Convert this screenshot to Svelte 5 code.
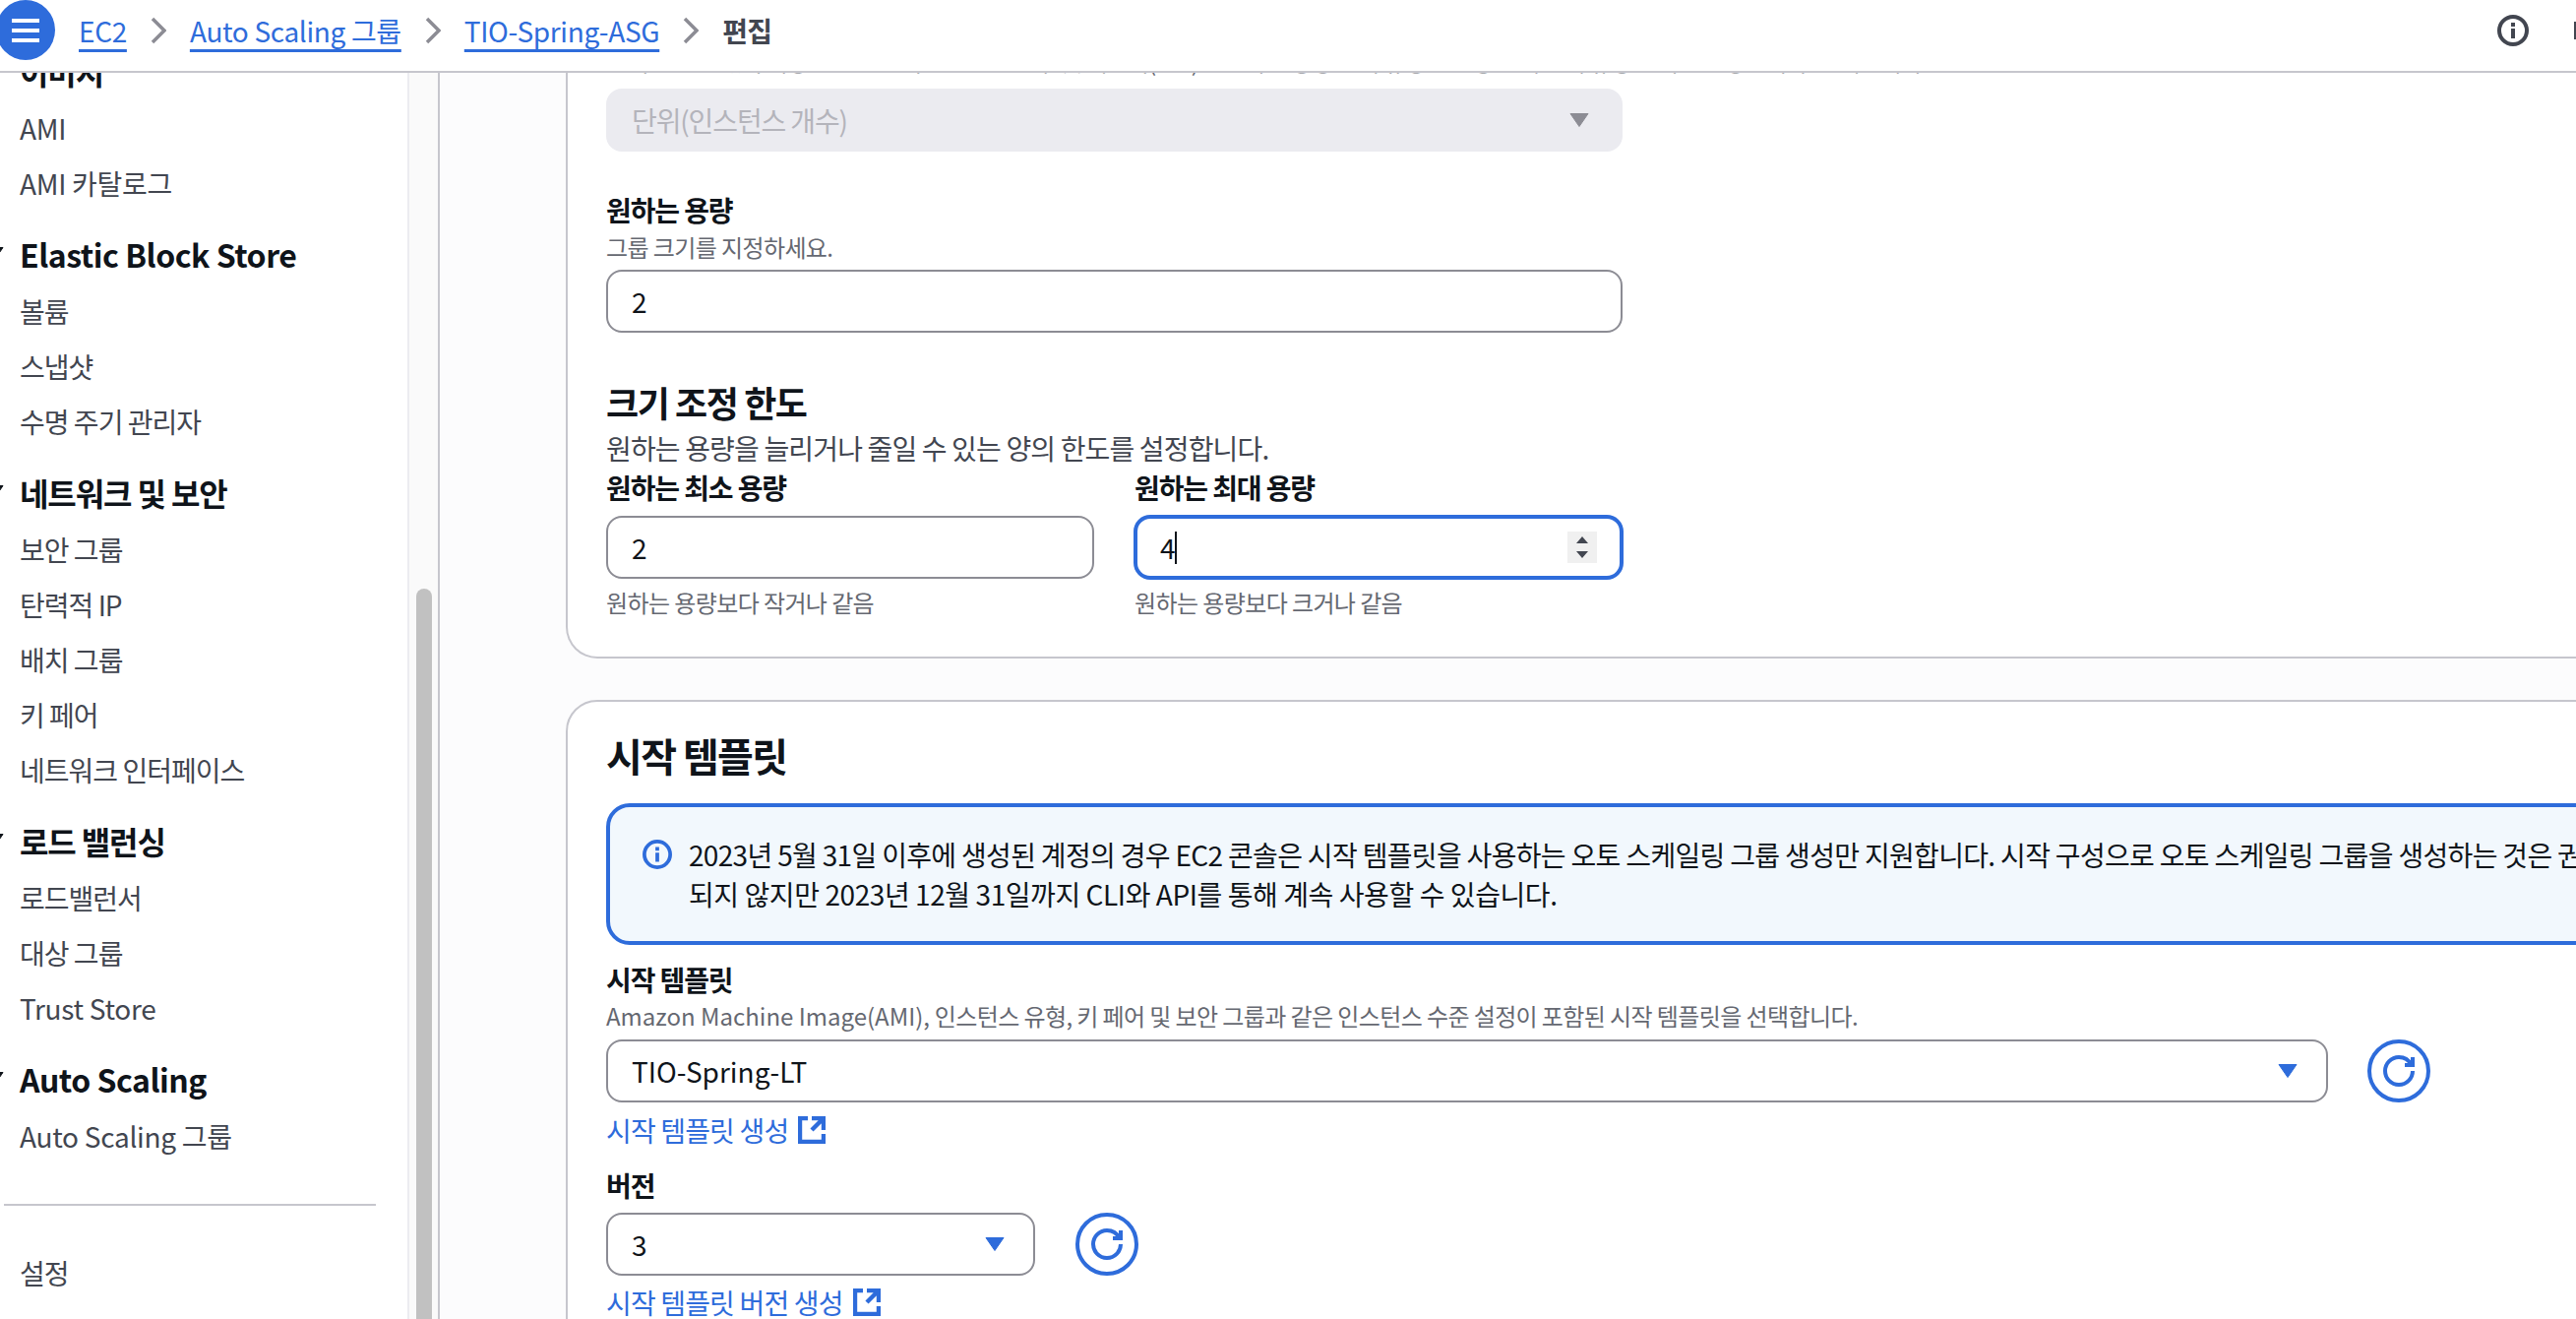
<script>
  const crumbs = [
    { label: 'EC2', link: true },
    { label: 'Auto Scaling 그룹', link: true },
    { label: 'TIO-Spring-ASG', link: true },
    { label: '편집', link: false }
  ];

  const groups = [
    { items: ['이미지', 'AMI', 'AMI 카탈로그'], boldFirst: true },
    { title: 'Elastic Block Store', items: ['볼륨', '스냅샷', '수명 주기 관리자'] },
    { title: '네트워크 및 보안', items: ['보안 그룹', '탄력적 IP', '배치 그룹', '키 페어', '네트워크 인터페이스'] },
    { title: '로드 밸런싱', items: ['로드밸런서', '대상 그룹', 'Trust Store'] },
    { title: 'Auto Scaling', items: ['Auto Scaling 그룹'] }
  ];

  const isLatin = (text) => /^[A-Z]/.test(text);
</script>

{#snippet caret()}
  <svg class="caret" viewBox="0 0 20 16" aria-hidden="true">
    <path d="M1 1.5h18l-9 13z" />
  </svg>
{/snippet}

{#snippet external()}
  <svg class="external" viewBox="1 1 14 14" aria-hidden="true">
    <path d="M14 8V2H8M14 2 8 8M6 2H2v12h12v-4" />
  </svg>
{/snippet}

{#snippet refresh()}
  <button class="refresh" aria-label="새로 고침">
    <svg viewBox="0 0 16 16" aria-hidden="true">
      <path d="M15 8c0 3.87-3.13 7-7 7s-7-3.13-7-7 3.13-7 7-7c2.79 0 5.2 1.63 6.33 4" />
      <path d="M15 1v4h-4" />
    </svg>
  </button>
{/snippet}

<div class="app">
  <header class="topbar">
    <button class="menu" aria-label="메뉴">
      <span></span><span></span><span></span>
    </button>
    <nav class="crumbs">
      {#each crumbs as crumb, i}
        {#if i > 0}
          <svg class="sep" viewBox="0 0 16 28" aria-hidden="true"><path d="M2 2l12 12L2 26" /></svg>
        {/if}
        <span class:crumb-link={crumb.link} class:crumb-current={!crumb.link}>{crumb.label}</span>
      {/each}
    </nav>
    <svg class="top-info" viewBox="0 0 32 32" aria-hidden="true">
      <circle cx="16" cy="16" r="14" />
      <path d="M16 14v10M16 8v4" />
    </svg>
    <span class="top-next"></span>
  </header>

  <div class="body">
    <aside class="side">
      <div class="side-scroll">
        {#each groups as group}
          <div class="group">
            {#if group.title}
              <div class="group-title" class:title-latin={isLatin(group.title)}>
                {@render caret()}
                {group.title}
              </div>
            {/if}
            {#each group.items as item, i}
              <div class="side-item" class:item-latin={isLatin(item)} class:side-bold={group.boldFirst && i === 0}>{item}</div>
            {/each}
          </div>
        {/each}
        <hr class="side-rule" />
        <div class="side-item">설정</div>
      </div>
    </aside>

    <div class="track"><div class="thumb"></div></div>

    <main class="main">
      <section class="card card-first">
        <p class="clipped">선택한 ASG 값이 이상 필요한 단위를 인스턴스 수 및 메모리(GiB)로 원하는 용량 단위 유형을 설정할 때 단위 유형 선택을 변경합니다. 선택합니다.</p>
        <div class="field-wide select disabled">
          <span>단위(인스턴스 개수)</span>
          {@render caret()}
        </div>

        <div class="label capacity-label">원하는 용량</div>
        <div class="desc">그룹 크기를 지정하세요.</div>
        <div class="field-wide input capacity-input">2</div>

        <h3 class="sub">크기 조정 한도</h3>
        <p class="lead">원하는 용량을 늘리거나 줄일 수 있는 양의 한도를 설정합니다.</p>
        <div class="limits">
          <div>
            <div class="label">원하는 최소 용량</div>
            <div class="input limit-input">2</div>
            <div class="desc hint">원하는 용량보다 작거나 같음</div>
          </div>
          <div>
            <div class="label">원하는 최대 용량</div>
            <div class="input limit-input focused">
              <span class="value">4<i class="text-caret"></i></span>
              <span class="spinner">
                <svg viewBox="0 0 14 32" aria-hidden="true"><path d="M7 5l6 7H1zM1 20h12l-6 7z" /></svg>
              </span>
            </div>
            <div class="desc hint">원하는 용량보다 크거나 같음</div>
          </div>
        </div>
      </section>

      <section class="card card-second">
        <h2 class="title">시작 템플릿</h2>
        <div class="alert">
          <svg class="alert-icon" viewBox="0 0 32 32" aria-hidden="true">
            <circle cx="16" cy="16" r="14" />
            <path d="M16 14v10M16 8v4" />
          </svg>
          <p>2023년 5월 31일 이후에 생성된 계정의 경우 EC2 콘솔은 시작 템플릿을 사용하는 오토 스케일링 그룹 생성만 지원합니다. 시작 구성으로 오토 스케일링 그룹을 생성하는 것은 권장<br /><span class="alert-second">되지 않지만 2023년 12월 31일까지 CLI와 API를 통해 계속 사용할 수 있습니다.</span></p>
        </div>

        <div class="label template-label">시작 템플릿</div>
        <div class="desc"><span class="latin">Amazon Machine Image(AMI),</span> 인스턴스 유형, 키 페어 및 보안 그룹과 같은 인스턴스 수준 설정이 포함된 시작 템플릿을 선택합니다.</div>
        <div class="select-row">
          <div class="select active template-select">
            <span class="latin">TIO-Spring-LT</span>
            {@render caret()}
          </div>
          {@render refresh()}
        </div>
        <div class="link">시작 템플릿 생성 {@render external()}</div>

        <div class="label version-label">버전</div>
        <div class="select-row version-row">
          <div class="select active version-select">
            <span>3</span>
            {@render caret()}
          </div>
          {@render refresh()}
        </div>
        <div class="link link-last">시작 템플릿 버전 생성 {@render external()}</div>
      </section>
    </main>
  </div>
</div>

<style>
  :global(body) {
    margin: 0;
    background: #fff;
  }

  .app {
    --blue: #2e6cdb;
    --line: #c6c6cd;
    --ink: #0f141a;
    width: 2618px;
    height: 1340px;
    overflow: hidden;
    display: flex;
    flex-direction: column;
    font-family: "Noto Sans CJK KR", "Noto Sans", sans-serif;
    font-size: 28px;
    line-height: 40px;
    letter-spacing: -0.03em;
    color: var(--ink);
  }

  /* top bar */
  .topbar {
    position: relative;
    z-index: 2;
    flex: none;
    box-sizing: border-box;
    height: 74px;
    display: flex;
    align-items: flex-start;
    background: #fff;
    border-bottom: 2px solid var(--line);
    overflow: hidden;
  }

  .menu {
    flex: none;
    box-sizing: border-box;
    width: 60px;
    height: 61px;
    margin: 0 0 0 -4px;
    padding: 0;
    border: 0;
    border-radius: 50%;
    background: var(--blue);
    display: flex;
    flex-direction: column;
    align-items: center;
    justify-content: center;
    gap: 6px;
  }

  .menu span {
    display: block;
    width: 28px;
    height: 4px;
    background: #fff;
  }

  .crumbs {
    display: flex;
    align-items: center;
    height: 62px;
    margin-left: 24px;
    white-space: nowrap;
    letter-spacing: -0.012em;
  }

  .crumb-link {
    color: var(--blue);
    text-decoration: underline;
    text-decoration-thickness: 3px;
    text-underline-offset: 7px;
  }

  .crumb-current {
    color: #424650;
    font-weight: 700;
    letter-spacing: -0.03em;
  }

  .sep {
    width: 16px;
    height: 28px;
    margin: 0 24px;
    fill: none;
    stroke: #8c8c94;
    stroke-width: 3.5;
  }

  .top-info {
    width: 32px;
    height: 32px;
    margin: 15px 0 0 auto;
    fill: none;
    stroke: #424650;
    stroke-width: 4;
  }

  .top-next {
    width: 2px;
    height: 18px;
    margin: 22px 0 0 46px;
    background: #424650;
  }

  /* page body */
  .body {
    flex: 1;
    min-height: 0;
    display: flex;
  }

  .side {
    flex: none;
    width: 416px;
    box-sizing: border-box;
    border-right: 2px solid #ececf0;
    overflow: hidden;
  }

  .side-scroll {
    margin-top: -28px;
    padding-left: 20px;
  }

  .group {
    margin-bottom: 18px;
  }

  .group-title {
    position: relative;
    height: 56px;
    line-height: 52px;
    font-size: 32px;
    font-weight: 700;
    letter-spacing: -0.035em;
    white-space: nowrap;
  }

  .title-latin {
    letter-spacing: -0.015em;
  }

  .group-title .caret {
    position: absolute;
    left: -36px;
    top: 18px;
    fill: var(--ink);
    stroke: var(--ink);
  }

  .side-item {
    height: 56px;
    line-height: 56px;
    color: #424650;
    letter-spacing: -0.035em;
  }

  .item-latin {
    letter-spacing: -0.01em;
  }

  .side-bold {
    font-size: 32px;
    font-weight: 700;
    line-height: 52px;
    letter-spacing: -0.035em;
    color: var(--ink);
  }

  .side-rule {
    height: 2px;
    margin: 41px 0 40px -16px;
    width: 378px;
    border: 0;
    background: var(--line);
  }

  .track {
    flex: none;
    width: 31px;
    box-sizing: border-box;
    padding-left: 7px;
    background: #fafafa;
    border-right: 2px solid var(--line);
  }

  .thumb {
    width: 16px;
    height: 800px;
    margin-top: 524px;
    border-radius: 8px 8px 0 0;
    background: #c1c1c1;
  }

  .main {
    flex: 1;
    min-width: 0;
    overflow: hidden;
    background: #fcfcfd;
    padding-left: 128px;
  }

  .card {
    box-sizing: border-box;
    width: 2400px;
    background: #fff;
    border: 2px solid var(--line);
    border-radius: 32px;
    padding: 0 39px;
  }

  .card-first {
    margin-top: -28px;
    padding-top: 0;
    padding-bottom: 39px;
    border-top: 0;
    border-top-left-radius: 0;
    border-top-right-radius: 0;
  }

  .card-second {
    margin-top: 42px;
    padding-top: 30px;
    padding-bottom: 40px;
  }

  .clipped {
    margin: 0;
    height: 32px;
    font-size: 24px;
    line-height: 32px;
    color: #656871;
    white-space: nowrap;
  }

  .label {
    font-weight: 700;
    line-height: 40px;
    letter-spacing: -0.04em;
  }

  .desc {
    font-size: 24px;
    line-height: 32px;
    letter-spacing: -0.025em;
    color: #656871;
    margin-top: 1px;
  }

  .field-wide {
    width: 1033px;
  }

  .select,
  .input {
    box-sizing: border-box;
    height: 64px;
    display: flex;
    align-items: center;
    justify-content: space-between;
    border: 2px solid #8c8c94;
    border-radius: 16px;
    padding: 0 24px;
    background: #fff;
  }

  .latin {
    letter-spacing: 0;
  }

  .disabled {
    margin-top: 12px;
    border-color: #ebebf0;
    background: #ebebf0;
    color: #b4b4bb;
    letter-spacing: -0.04em;
    padding-right: 32px;
  }

  .disabled .caret {
    fill: #8c8c94;
    stroke: #8c8c94;
  }

  .caret {
    width: 20px;
    height: 16px;
    flex: none;
    stroke-width: 1;
    stroke-linejoin: round;
  }

  .capacity-label {
    margin-top: 39px;
  }

  .capacity-label + .desc {
    margin-top: 2px;
  }

  .capacity-input {
    margin-top: 7px;
  }

  .sub {
    margin: 46px 0 0;
    font-size: 36px;
    line-height: 48px;
    font-weight: 700;
    letter-spacing: -0.04em;
  }

  .lead {
    margin: 3px 0 0;
    height: 40px;
    color: #424650;
  }

  .limits {
    width: 1033px;
    display: grid;
    grid-template-columns: 496px 496px;
    column-gap: 41px;
  }

  .limit-input {
    margin-top: 9px;
  }

  .hint {
    margin-top: 8px;
  }

  .focused {
    border: 3px solid var(--blue);
    box-shadow: 0 0 0 1px var(--blue);
    padding: 0 23px;
  }

  .value {
    display: inline-flex;
    align-items: center;
  }

  .text-caret {
    display: block;
    width: 2px;
    height: 33px;
    background: var(--ink);
  }

  .spinner {
    box-sizing: border-box;
    width: 30px;
    height: 32px;
    padding: 0 8px;
    background: #f0f0f0;
  }

  .spinner svg {
    display: block;
    width: 14px;
    height: 32px;
    fill: #424650;
  }

  .title {
    margin: 0;
    font-size: 40px;
    line-height: 48px;
    font-weight: 700;
    letter-spacing: -0.04em;
  }

  .alert {
    box-sizing: border-box;
    height: 144px;
    margin-top: 25px;
    display: flex;
    gap: 17px;
    padding: 28px 33px;
    border: 4px solid var(--blue);
    border-radius: 24px;
    background: #f2f8fd;
    white-space: nowrap;
    letter-spacing: -0.024em;
  }

  .alert p {
    margin: 0;
  }

  .alert-second {
    letter-spacing: -0.015em;
  }

  .alert-icon {
    flex: none;
    width: 30px;
    height: 30px;
    margin-top: 5px;
    fill: none;
    stroke: var(--blue);
    stroke-width: 4;
  }

  .template-label {
    margin-top: 15px;
  }

  .select-row {
    display: flex;
    align-items: center;
    gap: 40px;
    margin-top: 8px;
  }

  .version-row {
    margin-top: 8px;
    gap: 41px;
  }

  .active .caret {
    fill: var(--blue);
    stroke: var(--blue);
  }

  .active {
    padding-right: 29px;
  }

  .template-select {
    width: 1750px;
  }

  .version-select {
    width: 436px;
  }

  .refresh {
    flex: none;
    box-sizing: border-box;
    width: 64px;
    height: 64px;
    padding: 0;
    display: flex;
    align-items: center;
    justify-content: center;
    border: 4px solid var(--blue);
    border-radius: 50%;
    background: #fff;
  }

  .refresh svg {
    width: 32px;
    height: 32px;
    fill: none;
    stroke: var(--blue);
    stroke-width: 2;
  }

  .link {
    display: flex;
    align-items: center;
    gap: 10px;
    margin-top: 8px;
    color: var(--blue);
  }

  .link-last {
    margin-top: 7px;
  }

  .external {
    width: 28px;
    height: 28px;
    fill: none;
    stroke: var(--blue);
    stroke-width: 2.2;
  }

  .version-label {
    margin-top: 16px;
  }
</style>
